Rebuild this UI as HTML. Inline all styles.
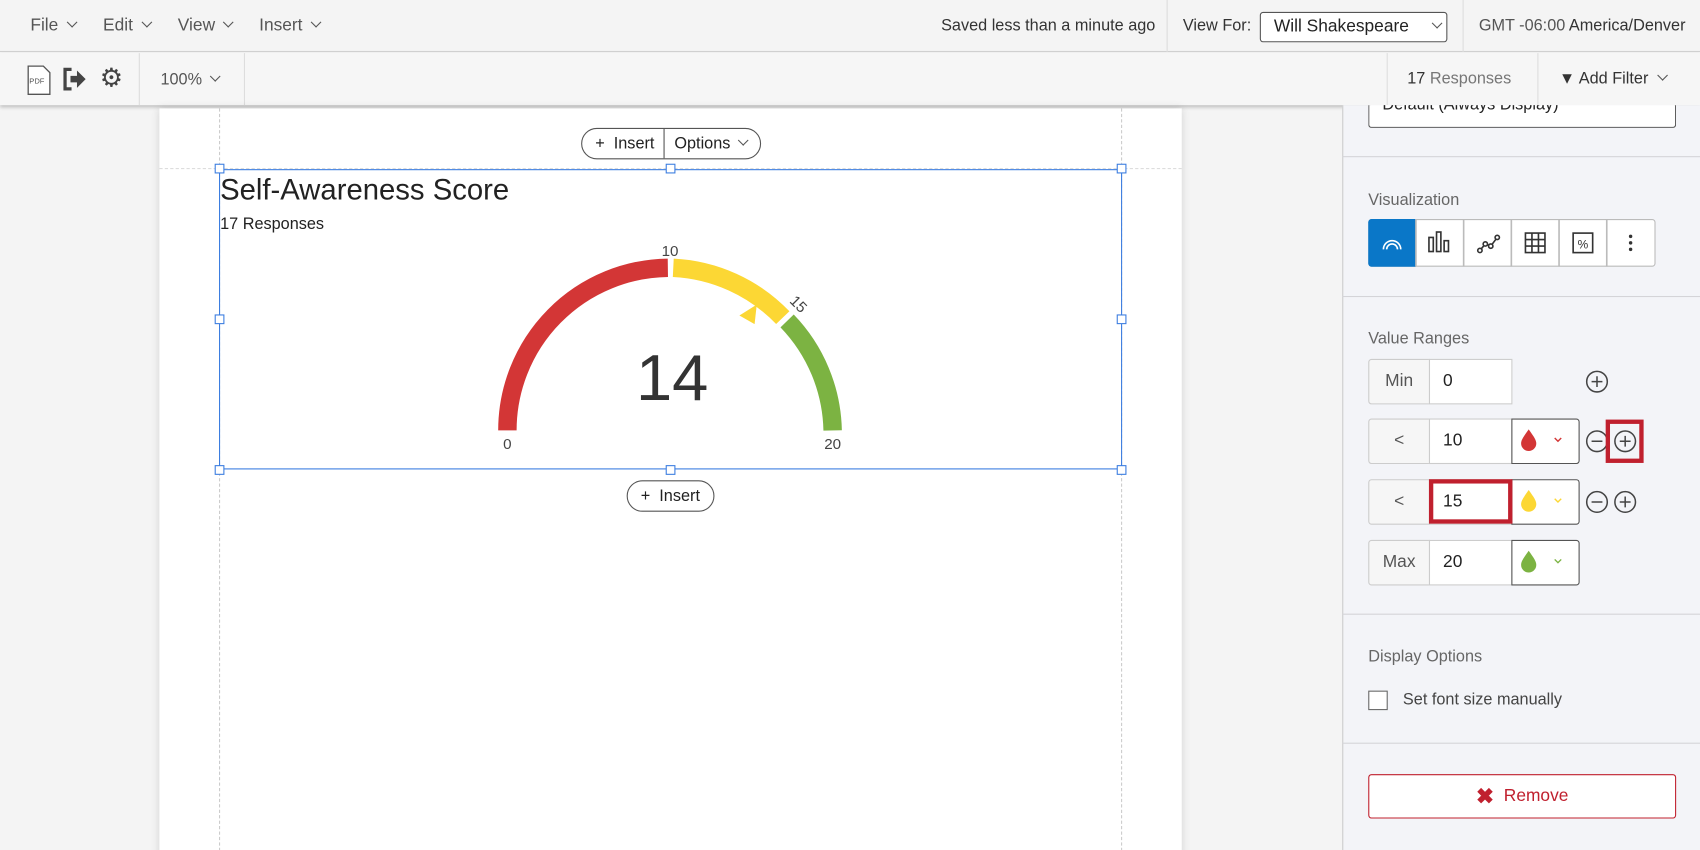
<!DOCTYPE html>
<html><head><meta charset="utf-8"><style>
*{box-sizing:border-box;margin:0;padding:0}
html,body{width:1700px;height:850px;overflow:hidden;background:#f4f4f4;font-family:"Liberation Sans",sans-serif}
#w{position:absolute;left:0;top:0;width:1568px;height:784px;transform:scale(1.08418);transform-origin:0 0;background:#f4f4f4;overflow:hidden}
.a{position:absolute}
.t{color:#555;font-size:16px}
.chev{display:inline-block;width:7px;height:7px;border-right:1.5px solid #555;border-bottom:1.5px solid #555;transform:rotate(45deg);margin-left:9px;position:relative;top:-4px}
.lbl{position:absolute;background:#f6f6f6;border:1px solid #ccc;color:#555;font-size:16px;text-align:center;line-height:40px;border-radius:3px 0 0 3px}
.inp{position:absolute;background:#fff;border:1px solid #ccc;font-size:16px;color:#222;line-height:40px;padding-left:12px}
.col{position:absolute;background:#fff;border:1px solid #555;border-radius:0 3px 3px 0}
</style></head><body><div id="w">
<div class="a" style="left:0;top:0;width:1568px;height:48px;background:#f4f4f4;border-bottom:1px solid #d0d0d0"></div>
<div class="a t" style="left:28px;top:15px">File<span class="chev"></span></div>
<div class="a t" style="left:95px;top:15px">Edit<span class="chev"></span></div>
<div class="a t" style="left:164px;top:15px">View<span class="chev"></span></div>
<div class="a t" style="left:239px;top:15px">Insert<span class="chev"></span></div>
<div class="a" style="left:868px;top:15px;font-size:15px;color:#333">Saved less than a minute ago</div>
<div class="a" style="left:1076px;top:0;width:1px;height:48px;background:#ddd"></div>
<div class="a" style="left:1091px;top:15px;font-size:15px;color:#333">View For:</div>
<div class="a" style="left:1162px;top:11px;width:173px;height:28px;border:1px solid #555;border-radius:3px;background:#fff;font-size:16px;color:#222;padding:4px 0 0 12px">Will Shakespeare<span class="chev" style="margin-left:22px"></span></div>
<div class="a" style="left:1349px;top:0;width:1px;height:48px;background:#ddd"></div>
<div class="a" style="left:1364px;top:15px;font-size:15px;color:#555">GMT -06:00 <span style="color:#333">America/Denver</span></div>
<div class="a" style="left:0;top:49px;width:1568px;height:48px;background:#f6f6f6;box-shadow:0 2px 3px rgba(0,0,0,.2)"></div>
<svg class="a" style="left:25px;top:60px" width="22" height="28"><path d="M1 1h14l6 6v20H1z" fill="#fff" stroke="#555" stroke-width="1.2"/><text x="2" y="17" font-size="7" font-family="Liberation Sans" fill="#555">PDF</text></svg>
<svg class="a" style="left:58px;top:62px" width="22" height="22"><path d="M8 2H2v18h6" fill="none" stroke="#444" stroke-width="3"/><path d="M7 8h6V3l8 8-8 8v-5H7z" fill="#444"/></svg>
<div class="a" style="left:92px;top:58px;font-size:24px;color:#444">⚙</div>
<div class="a" style="left:128px;top:49px;width:1px;height:48px;background:#ddd"></div>
<div class="a t" style="left:148px;top:65px;font-size:15px">100%<span class="chev"></span></div>
<div class="a" style="left:225px;top:49px;width:1px;height:48px;background:#ddd"></div>
<div class="a" style="left:1279px;top:49px;width:1px;height:48px;background:#ddd"></div>
<div class="a" style="left:1298px;top:64px;font-size:15px;color:#777"><b style="color:#333;font-weight:normal">17</b> Responses</div>
<div class="a" style="left:1418px;top:49px;width:1px;height:48px;background:#ddd"></div>
<div class="a" style="left:1438px;top:64px;font-size:15px;color:#333">▼ Add Filter<span class="chev" style="margin-left:10px"></span></div>
<div class="a" style="left:147px;top:100px;width:943px;height:700px;background:#fff;box-shadow:0 0 8px rgba(0,0,0,.15)"></div>
<div class="a" style="left:202px;top:100px;width:0;height:700px;border-left:1px dashed #ccc"></div>
<div class="a" style="left:1034px;top:100px;width:0;height:700px;border-left:1px dashed #ccc"></div>
<div class="a" style="left:147px;top:155px;width:943px;border-top:1px dashed #ddd"></div>
<div class="a" style="left:536px;top:118px;width:166px;height:29px;border:1px solid #555;border-radius:15px;background:#fff;font-size:15px;color:#222;line-height:27px"><span style="margin-left:12px">+&nbsp; Insert</span><span style="position:absolute;left:75px;top:0;height:27px;border-left:1px solid #555;padding-left:9px">Options<span class="chev" style="margin-left:8px"></span></span></div>
<div class="a" style="left:202px;top:156px;width:833px;height:277px;border:1px solid #3b7de0"></div>
<div class="a" style="left:578px;top:443px;width:81px;height:29px;border:1px solid #555;border-radius:15px;background:#fff;font-size:15px;color:#222;line-height:27px;padding-left:12px">+&nbsp; Insert</div>
<svg class="a" style="left:0;top:0" width="1100" height="800">
<g fill="#fff" stroke="#3b7de0" stroke-width="1"><rect x="198.5" y="151.5" width="8" height="8"/><rect x="614.5" y="151.5" width="8" height="8"/><rect x="1030.5" y="151.5" width="8" height="8"/><rect x="198.5" y="290.5" width="8" height="8"/><rect x="1030.5" y="290.5" width="8" height="8"/><rect x="198.5" y="429.5" width="8" height="8"/><rect x="614.5" y="429.5" width="8" height="8"/><rect x="1030.5" y="429.5" width="8" height="8"/></g>
<g fill="none" stroke-width="17">
<path d="M468 397A150 150 0 0 1 616 247" stroke="#d33636"/>
<path d="M621 247A150 150 0 0 1 722 293" stroke="#fcd734"/>
<path d="M726 296A150 150 0 0 1 768 397" stroke="#7cb342"/>
</g>
<path d="M682 291l16-10-2 18z" fill="#fcd734"/>
<g font-family="Liberation Sans" fill="#444" font-size="14" text-anchor="middle">
<text x="618" y="236">10</text><text x="468" y="414">0</text><text x="768" y="414">20</text>
<text x="736" y="285" transform="rotate(45 736 281)">15</text>
<text x="620" y="369" font-size="60" fill="#333">14</text>
</g>
</svg>
<div class="a" style="left:203px;top:160px;font-size:27px;color:#222">Self-Awareness Score</div>
<div class="a" style="left:203px;top:198px;font-size:15px;color:#222">17 Responses</div>
<div class="a" style="left:1238px;top:97px;width:330px;height:687px;background:#f3f4f8;border-left:1px solid #ccc"></div>
<div class="a" style="left:1262px;top:97px;width:284px;height:21px;border:1px solid #555;border-top:none;border-radius:0 0 3px 3px;background:#fff;overflow:hidden"><div style="margin:-9px 0 0 12px;font-size:15px;color:#222">Default (Always Display)</div></div>
<div class="a" style="left:1238px;top:144px;width:330px;height:1px;background:#d4d4d8"></div>
<div class="a" style="left:1262px;top:176px;font-size:15px;color:#666">Visualization</div>
<div class="a" style="left:1262px;top:202px;width:265px;height:44px;border:1px solid #bbb;border-radius:3px;background:#fff"></div>
<div class="a" style="left:1262px;top:202px;width:44px;height:44px;background:#0a77c8;border-radius:3px 0 0 3px"></div>
<svg class="a" style="left:1262px;top:202px" width="265" height="44"><g fill="none" stroke-width="1.5">
<path d="M14 28A8 8 0 0 1 30 28M17 28A5 5 0 0 1 27 28" stroke="#fff"/>
<g stroke="#bbb"><path d="M44 0v44M88 0v44M132 0v44M176 0v44M220 0v44"/></g>
<g stroke="#333"><rect x="56" y="17" width="4" height="13"/><rect x="63" y="12" width="4" height="18"/><rect x="70" y="20" width="4" height="10"/>
<path d="M103 29l5-6 5 2 6-8"/><circle cx="103" cy="29" r="2" fill="#fff"/><circle cx="108" cy="23" r="2" fill="#fff"/><circle cx="113" cy="25" r="2" fill="#fff"/><circle cx="119" cy="17" r="2" fill="#fff"/>
<path d="M145 13h18v18h-18zM145 19h18M145 25h18M151 13v18M157 13v18"/>
<rect x="189" y="13" width="18" height="18"/></g></g>
<text x="198" y="27" font-size="11" text-anchor="middle" fill="#333" font-family="Liberation Sans">%</text>
<g fill="#333"><circle cx="242" cy="16" r="1.6"/><circle cx="242" cy="22" r="1.6"/><circle cx="242" cy="28" r="1.6"/></g></svg>
<div class="a" style="left:1238px;top:273px;width:330px;height:1px;background:#d4d4d8"></div>
<div class="a" style="left:1262px;top:304px;font-size:15px;color:#666">Value Ranges</div>
<div class="lbl" style="left:1262px;top:331px;width:57px;height:42px">Min</div>
<div class="inp" style="left:1318px;top:331px;width:77px;height:42px">0</div>
<div class="lbl" style="left:1262px;top:386px;width:57px;height:42px">&lt;</div>
<div class="inp" style="left:1318px;top:386px;width:77px;height:42px">10</div>
<div class="col" style="left:1394px;top:386px;width:63px;height:42px"></div>
<div class="lbl" style="left:1262px;top:442px;width:57px;height:42px">&lt;</div>
<div class="inp" style="left:1318px;top:442px;width:77px;height:42px">15</div>
<div class="col" style="left:1394px;top:442px;width:63px;height:42px"></div>
<div class="lbl" style="left:1262px;top:498px;width:57px;height:42px">Max</div>
<div class="inp" style="left:1318px;top:498px;width:77px;height:42px">20</div>
<div class="col" style="left:1394px;top:498px;width:63px;height:42px"></div>
<svg class="a" style="left:1394px;top:386px" width="63" height="160"><g fill="none" stroke-width="1.3">
<path d="M16 10c-5 7-7 10-7 13a7 7 0 0 0 14 0c0-3-2-6-7-13z" fill="#d33636" stroke="none"/><path d="M40 18l3 3 3-3" stroke="#d33636"/>
<path d="M16 66c-5 7-7 10-7 13a7 7 0 0 0 14 0c0-3-2-6-7-13z" fill="#fcd734" stroke="none"/><path d="M40 74l3 3 3-3" stroke="#fcd734"/>
<path d="M16 122c-5 7-7 10-7 13a7 7 0 0 0 14 0c0-3-2-6-7-13z" fill="#7cb342" stroke="none"/><path d="M40 130l3 3 3-3" stroke="#7cb342"/></g></svg>
<svg class="a" style="left:1460px;top:340px" width="60" height="140"><g fill="none" stroke="#444" stroke-width="1.4">
<circle cx="13" cy="12" r="9.5"/><path d="M8 12h10M13 7v10"/>
<circle cx="13" cy="67" r="9.5"/><path d="M8 67h10"/>
<circle cx="39" cy="67" r="9.5"/><path d="M34 67h10M39 62v10"/>
<circle cx="13" cy="123" r="9.5"/><path d="M8 123h10"/>
<circle cx="39" cy="123" r="9.5"/><path d="M34 123h10M39 118v10"/></g></svg>
<div class="a" style="left:1481px;top:387px;width:35px;height:40px;border:4px solid #c0202e"></div>
<div class="a" style="left:1318px;top:442px;width:77px;height:41px;border:4px solid #c0202e"></div>
<div class="a" style="left:1238px;top:566px;width:330px;height:1px;background:#d4d4d8"></div>
<div class="a" style="left:1262px;top:597px;font-size:15px;color:#666">Display Options</div>
<div class="a" style="left:1262px;top:637px;width:18px;height:18px;border:1px solid #666;background:#fff"></div>
<div class="a" style="left:1294px;top:637px;font-size:15px;color:#444">Set font size manually</div>
<div class="a" style="left:1238px;top:685px;width:330px;height:1px;background:#d4d4d8"></div>
<div class="a" style="left:1262px;top:714px;width:284px;height:41px;border:1px solid #c0202e;border-radius:3px;background:#fff;text-align:center;line-height:39px;font-size:16px;color:#c0202e"><b style="font-size:20px;vertical-align:-2px">✖</b>&nbsp; Remove</div>
</div></body></html>
